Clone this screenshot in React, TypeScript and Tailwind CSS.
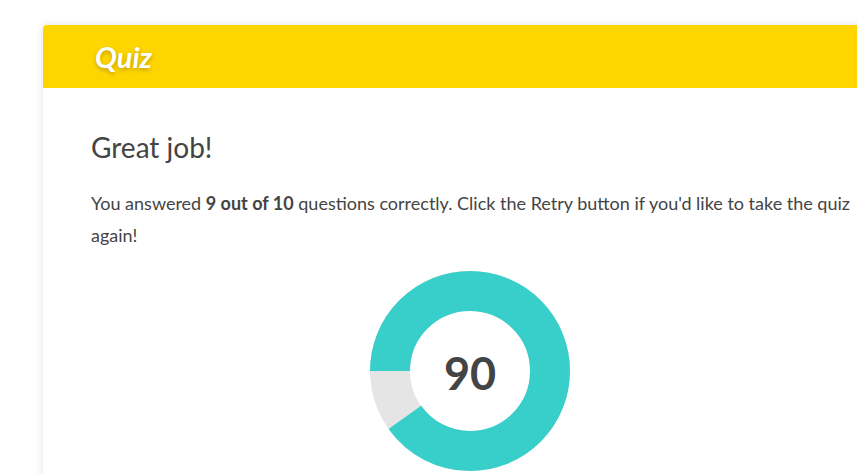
const score = 90

function Donut({ value }: { value: number }) {
  const r = 80
  const c = 2 * Math.PI * r
  return (
    <div className="relative h-[200px] w-[200px]">
      <svg width="200" height="200" viewBox="0 0 200 200">
        <circle cx="100" cy="100" r={r} fill="none" stroke="#e5e5e5" strokeWidth="40" />
        <circle
          cx="100"
          cy="100"
          r={r}
          fill="none"
          stroke="#38cfca"
          strokeWidth="40"
          strokeDasharray={`${(c * value) / 100} ${c}`}
          transform="rotate(180 100 100)"
        />
      </svg>
      <div className="absolute inset-0 flex items-center justify-center pt-[6px] text-[45px] font-bold text-[#444]">
        {value}
      </div>
    </div>
  )
}

export default function App() {
  return (
    <div className="h-[474px] overflow-hidden bg-white pl-[43px] pt-[25px] font-['Lato',sans-serif]">
      <div className="w-[854px] rounded-t-[4px] bg-white shadow-[0_0_8px_rgba(0,0,0,0.12)]">
        <div className="flex h-[63px] items-center rounded-t-[4px] bg-[#ffd500] pl-[52px]">
          <h1 className="text-[29px] font-bold italic text-white [text-shadow:0_2px_4px_rgba(0,0,0,0.25)]">
            Quiz
          </h1>
        </div>
        <div className="px-12 pt-[42px] pb-10">
          <h2 className="text-[28px] leading-[34px] text-[#444]">Great job!</h2>
          <p className="mt-[23px] w-[775px] text-[18px] leading-[32px] text-[#444]">
            You answered <strong>9 out of 10</strong> questions correctly. Click the Retry button if you'd like to take the
            quiz again!
          </p>
          <div className="mt-[20px] flex w-[758px] justify-center">
            <Donut value={score} />
          </div>
        </div>
      </div>
    </div>
  )
}
